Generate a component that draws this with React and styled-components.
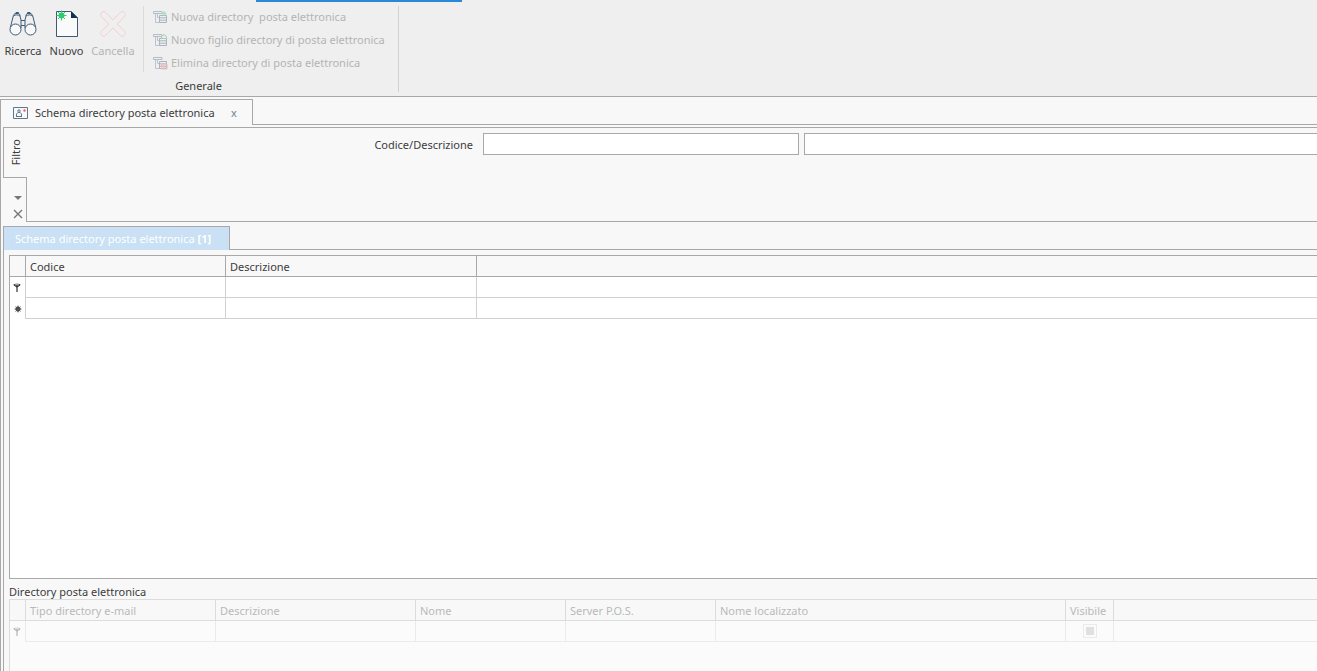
import React from "react";
import styled, { createGlobalStyle } from "styled-components";

const line = "#a8a8a8";
const softLine = "#d0d0d0";
const surface = "#f8f8f8";

const GlobalStyle = createGlobalStyle`
  *, *::before, *::after { box-sizing: border-box; }
  body {
    margin: 0;
    background: ${surface};
    color: #3c3c3c;
    font: 11px/16px "Noto Sans", "Open Sans", sans-serif;
  }
  button, input { font: inherit; color: inherit; border-radius: 0; }
  button { padding: 0; border: 0; background: none; }
  svg { display: block; flex: none; }
`;

const Page = styled.div`
  min-height: 100vh;
  display: flex;
  flex-direction: column;
  overflow-x: hidden;
`;

const Ribbon = styled.header`
  background: #efefef;
  border-bottom: 1px solid ${line};
  padding-bottom: 4px;
`;

const ActiveMarker = styled.div`
  width: 206px;
  height: 2px;
  margin: 0 0 4px 256px;
  background: #2b88d8;
`;

const RibbonGroup = styled.section`
  width: fit-content;
  min-width: 399px;
  padding: 0 5px 0 4px;
  border-right: 1px solid #d2d2d2;
`;

const RibbonTools = styled.div`
  display: flex;
`;

const LargeTools = styled.div`
  display: grid;
  grid-template-columns: 38px 35px 44px;
  gap: 7px;
  height: 66px;
  padding-right: 8px;
  border-right: 1px solid #dadada;
`;

const LargeButton = styled.button`
  display: flex;
  flex-direction: column;
  align-items: center;
  gap: 2px;
  padding-top: 3px;

  &:disabled { color: #b4b4b4; }
`;

const SmallTools = styled.div`
  display: flex;
  flex-direction: column;
  padding-left: 9px;
`;

const SmallButton = styled.button`
  display: flex;
  align-items: center;
  gap: 3px;
  height: 23px;
  padding-bottom: 2px;
  white-space: pre;

  &:disabled { color: #b4b4b4; }
`;

const GroupTitle = styled.h2`
  margin: 4px 0 0;
  font-size: 11px;
  line-height: 13px;
  font-weight: 400;
  text-align: center;
`;

const TabStrip = styled.nav`
  display: flex;
  margin-top: ${(p) => p.$gap}px;
`;

const TabFiller = styled.div`
  flex: 1;
  border-bottom: 1px solid ${line};
`;

const DocumentTab = styled.div`
  display: flex;
  align-items: center;
  justify-content: space-between;
  min-width: 253px;
  height: 26px;
  padding: 0 12px;
  border: 1px solid ${line};
  border-bottom: 0;
`;

const TabTitle = styled.button`
  display: flex;
  align-items: center;
  gap: 7px;
`;

const TabClose = styled.button`
  width: 12px;
  color: #6c8193;
`;

const Workspace = styled.main`
  flex: 1;
  display: flex;
  flex-direction: column;
  padding: 2px 0 0 2px;
  border-left: 1px solid ${line};
`;

const FilterPanel = styled.section`
  display: flex;
  height: 95px;
  border-top: 1px solid ${line};
`;

const FilterSide = styled.div`
  display: flex;
  flex-direction: column;
  width: 24px;
`;

const FilterTab = styled.button`
  display: flex;
  align-items: center;
  justify-content: center;
  height: 50px;
  border-left: 1px solid ${line};
  border-bottom: 1px solid ${line};

  span {
    writing-mode: vertical-rl;
    transform: rotate(180deg);
  }
`;

const FilterActions = styled.div`
  flex: 1;
  display: flex;
  flex-direction: column;
  align-items: flex-end;
  justify-content: flex-end;
  gap: 6px;
  padding: 0 3px 3px 0;
  border-right: 1px solid ${line};
`;

const FilterBody = styled.div`
  flex: 1;
  display: flex;
  padding-top: 5px;
  border-bottom: 1px solid ${line};
`;

const FieldLabel = styled.label`
  width: 446px;
  margin-right: 10px;
  line-height: 24px;
  text-align: right;
`;

const Field = styled.input`
  flex: ${(p) => (p.$fill ? "1" : "0 0 316px")};
  min-width: 0;
  height: 22px;
  margin-right: ${(p) => (p.$fill ? 0 : 5)}px;
  padding: 0 4px;
  background: #fff;
  border: 1px solid ${line};
  border-right-width: ${(p) => (p.$fill ? 0 : 1)}px;
`;

const ViewTab = styled.button`
  min-width: 227px;
  height: 24px;
  padding: 1px 11px 0;
  border: 1px solid ${line};
  border-bottom: 0;
  background: #c9e0f5;
  color: #fff;
  text-align: left;
`;

const ViewPanel = styled.section`
  flex: 1;
  display: flex;
  flex-direction: column;
  padding: 5px 0 0 5px;
  border-left: 1px solid ${line};
`;

const GridFrame = styled.div`
  flex: ${(p) => (p.$muted ? "0 0 72px" : "1")};
  min-height: ${(p) => (p.$muted ? 0 : "120px")};
  background: ${(p) => (p.$muted ? "#fbfbfb" : "#fff")};
  border: 1px solid ${(p) => (p.$muted ? "#dcdcdc" : line)};
  border-right: 0;
  border-bottom-width: ${(p) => (p.$muted ? 0 : 1)}px;
`;

const Grid = styled.table`
  --head-line: ${(p) => (p.$muted ? "#dcdcdc" : line)};
  --cell-line: ${(p) => (p.$muted ? "#ebebeb" : softLine)};
  width: 100%;
  table-layout: fixed;
  border-collapse: separate;
  border-spacing: 0;
  color: ${(p) => (p.$muted ? "#b8b8b8" : "inherit")};
`;

const HeadCell = styled.th`
  width: ${(p) => (p.$width ? `${p.$width}px` : "auto")};
  height: 21px;
  padding: 1px 4px 0;
  background: ${surface};
  border-bottom: 1px solid var(--head-line);
  border-right: 1px solid var(--head-line);
  font-weight: 400;
  text-align: left;
  line-height: 19px;
  white-space: nowrap;

  &:last-child { border-right: 0; }
`;

const Cell = styled.td`
  height: 21px;
  padding: 0;
  border-bottom: 1px solid var(--cell-line);
  border-right: 1px solid var(--cell-line);
  line-height: 0;
  text-align: center;

  &:last-child { border-right: 0; }
`;

const IndicatorCell = styled(Cell)`
  border-bottom: 0;
  border-right-color: var(--cell-line);

  svg { margin: 0 auto; }
`;

const CellInput = styled.input`
  width: 100%;
  height: 20px;
  padding: 0 4px;
  border: 0;
  background: transparent;
`;

const CellCheck = styled.input`
  appearance: none;
  width: 14px;
  height: 14px;
  margin: 0;
  padding: 2px;
  border: 1px solid #ebebeb;
  background: #e0e0e0 content-box;
  vertical-align: middle;
`;

const SectionTitle = styled.h3`
  margin: 5px 0 0;
  font-size: 11px;
  line-height: 15px;
  font-weight: 400;
`;

const Binoculars = () => (
  <svg width="28" height="32" viewBox="0 0 28 32" fill="none" stroke="#3d5a78">
    <circle cx="6.5" cy="20.5" r="5.5" fill="#f8f8f8" />
    <circle cx="21.5" cy="20.5" r="5.5" fill="#f8f8f8" />
    <path d="M1.5 18 4 8C4.500 5.500 5.500 4.500 7 4.500h2c1.500 0 2 1 2 2.500l1 4v8M26.500 18 24 8c-.5-2.500-1.500-3.500-3-3.500h-2c-1.500 0-2 1-2 2.500l-1 4v8" />
    <path d="M4.500 7C6 5.500 9 5.500 11 7M17 7c2-1.500 5-1.500 6.500 0M12 11.500h4M12 16.500h4M7 4.500V3.500h2.500v1M18.500 4.500v-1H21v1" />
  </svg>
);

const NewPage = () => (
  <svg width="24" height="32" viewBox="0 0 24 32">
    <path d="M1.5 2.500H16L22.500 9v18.500h-21z" fill="#fafafa" stroke="#3d5a78" />
    <path d="M16 2v7h7z" fill="#12304f" />
    <path d="M6.500 1.500v10M1.500 6.500h10M3 3l7 7M10 3l-7 7" stroke="#2ecc71" />
    <circle cx="6.500" cy="6.500" r="3" fill="#2ecc71" />
  </svg>
);

const Cross = () => (
  <svg width="28" height="32" viewBox="0 0 28 32" fill="none" stroke="#f7cdd0">
    <path d="M3 3.300c1.300-1 2.500-1 3.700.2L14 10.800l7.300-7.300c1.200-1.200 2.400-1.200 3.700-.2 1.800 1.300 1.900 2.900.6 4.200L18.300 15l7.300 7.300c1.300 1.300 1.200 2.900-.6 4.200-1.300 1-2.500 1-3.700-.2L14 19l-7.300 7.300c-1.200 1.200-2.400 1.200-3.700.2-1.800-1.300-1.900-2.900-.6-4.200L9.700 15 2.400 7.500C1.100 6.200 1.200 4.600 3 3.300z" />
  </svg>
);

const DirectoryIcon = ({ kind }) => (
  <svg width="15" height="14" viewBox="0 0 15 14" fill="none">
    <path d="M.5 1.500h8.500v2H.5z" stroke="#b3bdc7" />
    <path d="M2.500 4v8.500h4M4.500 4v3.500h2" stroke="#bcc5ce" />
    <path d="M6.500 5.500h7v7h-7zM6.500 7.800h7M6.500 10.200h7" stroke="#a9b4c0" />
    {kind === "new" && <path d="M8.500 3.500h5M11 1v5M9.500 2l3 3M12.500 2l-3 3" stroke="#a8dfbe" />}
    {kind === "child" && <path d="M8.500 5.500v-2l2.500-2 2.500 2v2z" stroke="#a9c9b8" fill="#e2f2e8" />}
    {kind === "delete" && <path d="M9 8.500l4 4M13 8.500l-4 4M8.500 8h5.500v5H8.500z" stroke="#efbcc2" />}
  </svg>
);

const SchemaIcon = () => (
  <svg width="15" height="12" viewBox="0 0 15 12" fill="none" stroke="#60788f">
    <path d="M.5.500h14v11H.5z" />
    <path d="M3 9.500h6M3.500 9V7L5 5.500h2L8.500 7v2M5 3h2v2.500H5z" />
    <circle cx="11.500" cy="3.500" r="1.200" fill="#f0606a" stroke="none" />
  </svg>
);

const FilterGlyph = ({ color }) => (
  <svg width="9" height="9" viewBox="0 0 9 9">
    <path d="M.5 1.500C.5.500 7.500.500 7.500 1.500 7.500 3 5 3.500 4.600 4.500V9H3.400V4.500C3 3.500.5 3 .5 1.500z" fill={color} />
    <path d="M2 1.800h4" stroke="#fff" strokeWidth=".8" />
  </svg>
);

const NewRowGlyph = () => (
  <svg width="8" height="8" viewBox="0 0 8 8" fill="#333" stroke="#555">
    <circle cx="4" cy="4" r="2.200" />
    <path d="M4 .5v7M.5 4h7M1.500 1.500l5 5M6.500 1.500l-5 5" strokeWidth=".8" />
  </svg>
);

const mainColumns = [
  { name: "Codice", width: 200 },
  { name: "Descrizione", width: 251 },
];

const directoryColumns = [
  { name: "Tipo directory e-mail", width: 190 },
  { name: "Descrizione", width: 200 },
  { name: "Nome", width: 150 },
  { name: "Server P.O.S.", width: 150 },
  { name: "Nome localizzato", width: 350 },
  { name: "Visibile", width: 48, check: true },
];

function DataGrid({ label, columns, rows, muted }) {
  return (
    <GridFrame $muted={muted}>
      <Grid $muted={muted} aria-label={label}>
        <thead>
          <tr>
            <HeadCell $width={16} />
            {columns.map((c) => (
              <HeadCell key={c.name} $width={c.width} scope="col">{c.name}</HeadCell>
            ))}
            <HeadCell />
          </tr>
        </thead>
        <tbody>
          {rows.map((row) => (
            <tr key={row}>
              <IndicatorCell>
                {row === "Filtro" ? <FilterGlyph color={muted ? "#b5b5b5" : "#333"} /> : <NewRowGlyph />}
              </IndicatorCell>
              {columns.map((c) => (
                <Cell key={c.name}>
                  {c.check ? (
                    <CellCheck type="checkbox" disabled aria-label={`${row} ${c.name}`} />
                  ) : (
                    <CellInput type="text" disabled={muted} aria-label={`${row} ${c.name}`} />
                  )}
                </Cell>
              ))}
              <Cell />
            </tr>
          ))}
        </tbody>
      </Grid>
    </GridFrame>
  );
}

export default function App() {
  return (
    <Page>
      <GlobalStyle />
      <Ribbon>
        <ActiveMarker />
        <RibbonGroup>
          <RibbonTools>
            <LargeTools>
              <LargeButton><Binoculars />Ricerca</LargeButton>
              <LargeButton><NewPage />Nuovo</LargeButton>
              <LargeButton disabled><Cross />Cancella</LargeButton>
            </LargeTools>
            <SmallTools>
              <SmallButton disabled><DirectoryIcon kind="new" />{"Nuova directory  posta elettronica"}</SmallButton>
              <SmallButton disabled><DirectoryIcon kind="child" />Nuovo figlio directory di posta elettronica</SmallButton>
              <SmallButton disabled><DirectoryIcon kind="delete" />Elimina directory di posta elettronica</SmallButton>
            </SmallTools>
          </RibbonTools>
          <GroupTitle>Generale</GroupTitle>
        </RibbonGroup>
      </Ribbon>

      <TabStrip $gap={2}>
        <DocumentTab>
          <TabTitle><SchemaIcon />Schema directory posta elettronica</TabTitle>
          <TabClose aria-label="Chiudi">x</TabClose>
        </DocumentTab>
        <TabFiller />
      </TabStrip>

      <Workspace>
        <FilterPanel>
          <FilterSide>
            <FilterTab><span>Filtro</span></FilterTab>
            <FilterActions>
              <button aria-label="Opzioni filtro">
                <svg width="10" height="10" viewBox="0 0 10 10"><path d="M1 3h8L5 7z" fill="#777" /></svg>
              </button>
              <button aria-label="Cancella filtro">
                <svg width="10" height="10" viewBox="0 0 10 10"><path d="M1 1l8 8M9 1L1 9" stroke="#777" strokeWidth="1.400" /></svg>
              </button>
            </FilterActions>
          </FilterSide>
          <FilterBody>
            <FieldLabel htmlFor="codice">Codice/Descrizione</FieldLabel>
            <Field id="codice" type="text" />
            <Field $fill type="text" aria-label="Descrizione" />
          </FilterBody>
        </FilterPanel>

        <TabStrip $gap={4}>
          <ViewTab>Schema directory posta elettronica <b>[1]</b></ViewTab>
          <TabFiller />
        </TabStrip>

        <ViewPanel>
          <DataGrid label="Schema directory posta elettronica" columns={mainColumns} rows={["Filtro", "Nuova riga"]} />
          <SectionTitle>Directory posta elettronica</SectionTitle>
          <DataGrid label="Directory posta elettronica" columns={directoryColumns} rows={["Filtro"]} muted />
        </ViewPanel>
      </Workspace>
    </Page>
  );
}
